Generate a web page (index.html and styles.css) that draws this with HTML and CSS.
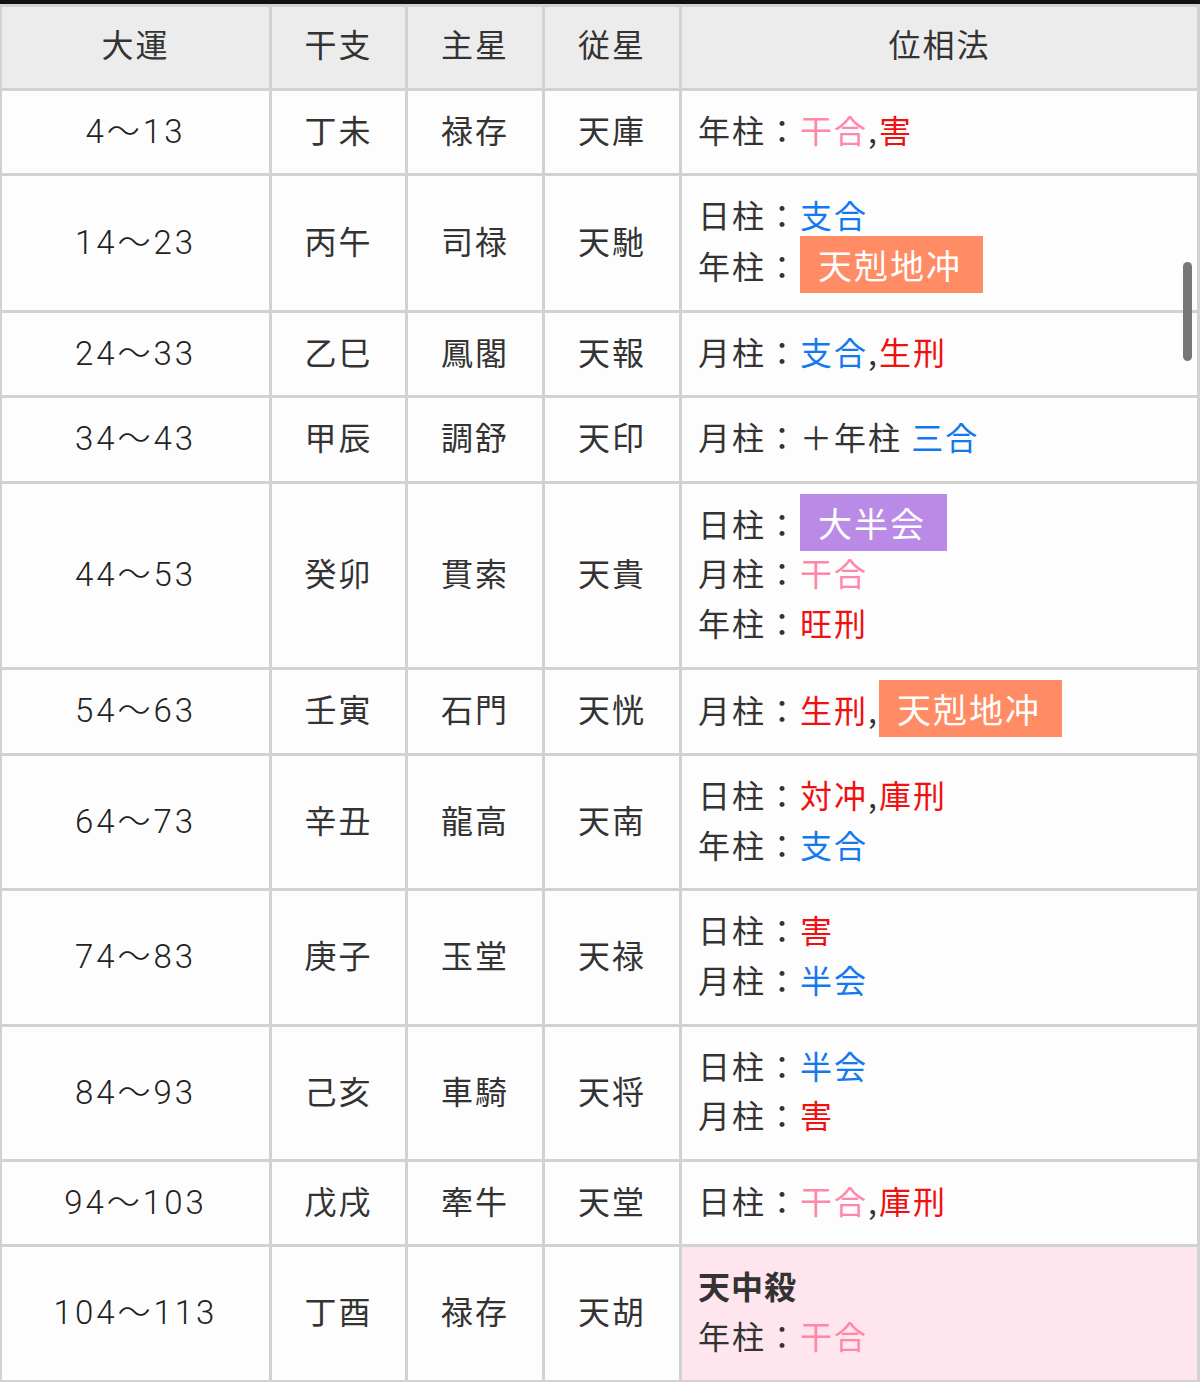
FILE: index.html
```html
<!DOCTYPE html>
<html lang="ja">
<head>
  <meta charset="UTF-8">
  <title>大運表</title>
  <link rel="stylesheet" href="styles.css">
</head>
<body>
  <div class="topbar"></div>
  <table class="unsei">
    <colgroup>
      <col class="c-age">
      <col class="c-kanshi">
      <col class="c-star">
      <col class="c-star">
      <col class="c-phase">
    </colgroup>
    <thead>
      <tr>
        <th>大運</th>
        <th>干支</th>
        <th>主星</th>
        <th>従星</th>
        <th>位相法</th>
      </tr>
    </thead>
    <tbody>
      <tr>
        <td class="age">4〜13</td><td>丁未</td><td>禄存</td><td>天庫</td>
        <td class="phase">年柱：<span class="kan">干合</span>,<span class="red">害</span></td>
      </tr>
      <tr>
        <td class="age">14〜23</td><td>丙午</td><td>司禄</td><td>天馳</td>
        <td class="phase">日柱：<span class="blue">支合</span><br>年柱：<span class="badge orange">天剋地冲</span></td>
      </tr>
      <tr>
        <td class="age">24〜33</td><td>乙巳</td><td>鳳閣</td><td>天報</td>
        <td class="phase">月柱：<span class="blue">支合</span>,<span class="red">生刑</span></td>
      </tr>
      <tr>
        <td class="age">34〜43</td><td>甲辰</td><td>調舒</td><td>天印</td>
        <td class="phase">月柱：＋年柱 <span class="blue">三合</span></td>
      </tr>
      <tr>
        <td class="age">44〜53</td><td>癸卯</td><td>貫索</td><td>天貴</td>
        <td class="phase">日柱：<span class="badge purple">大半会</span><br>月柱：<span class="kan">干合</span><br>年柱：<span class="red">旺刑</span></td>
      </tr>
      <tr>
        <td class="age">54〜63</td><td>壬寅</td><td>石門</td><td>天恍</td>
        <td class="phase">月柱：<span class="red">生刑</span>,<span class="badge orange">天剋地冲</span></td>
      </tr>
      <tr>
        <td class="age">64〜73</td><td>辛丑</td><td>龍高</td><td>天南</td>
        <td class="phase">日柱：<span class="red">対冲</span>,<span class="red">庫刑</span><br>年柱：<span class="blue">支合</span></td>
      </tr>
      <tr>
        <td class="age">74〜83</td><td>庚子</td><td>玉堂</td><td>天禄</td>
        <td class="phase">日柱：<span class="red">害</span><br>月柱：<span class="blue">半会</span></td>
      </tr>
      <tr>
        <td class="age">84〜93</td><td>己亥</td><td>車騎</td><td>天将</td>
        <td class="phase">日柱：<span class="blue">半会</span><br>月柱：<span class="red">害</span></td>
      </tr>
      <tr>
        <td class="age">94〜103</td><td>戊戌</td><td>牽牛</td><td>天堂</td>
        <td class="phase">日柱：<span class="kan">干合</span>,<span class="red">庫刑</span></td>
      </tr>
      <tr>
        <td class="age">104〜113</td><td>丁酉</td><td>禄存</td><td>天胡</td>
        <td class="phase tenchu"><strong>天中殺</strong><br>年柱：<span class="kan">干合</span></td>
      </tr>
    </tbody>
  </table>
  <div class="scroll-thumb"></div>
</body>
</html>
```

FILE: styles.css
```css
body {
  margin: 0;
  background: #fdfdfd;
  font-family: "Noto Sans CJK JP", "Noto Sans", sans-serif;
  color: #333;
  overflow: hidden;
}
.topbar {
  height: 4px;
  background: #111;
}
.unsei {
  width: calc(100% + 1px);
  margin-left: -1px;
  border-collapse: collapse;
  table-layout: fixed;
  font-size: 32px;
  letter-spacing: 2px;
  line-height: 49.8px;
}
.c-age { width: 270px; }
.c-kanshi { width: 136px; }
.c-star { width: 137px; }
.unsei th, .unsei td {
  border: 3px solid #d2d2d2;
  padding: 14px 0 18.7px;
  text-align: center;
  vertical-align: middle;
  font-weight: normal;
  white-space: nowrap;
}
.unsei th {
  background: #ececec;
  padding: 12px 0 19px;
}
.unsei td.age {
  font-family: Roboto, "Noto Sans CJK JP", sans-serif;
  font-size: 33px;
  font-weight: 300;
  letter-spacing: 3px;
  color: #222;
  padding: 16px 0 16.7px;
}
.unsei td.phase {
  text-align: left;
  padding-left: 16px;
}
.tenchu {
  background: #ffe6ee;
}
.tenchu strong {
  font-weight: bold;
  letter-spacing: 1px;
}
.blue { color: #1479ee; }
.red { color: #f01010; }
.kan { color: #ff88aa; }
.badge {
  color: #fff;
  font-size: 34px;
  padding: 4px 21px 4px 18px;
}
.orange { background: #ff8c64; }
.purple { background: #b98ae6; }
.scroll-thumb {
  position: absolute;
  left: 1183px;
  top: 262px;
  width: 9px;
  height: 99px;
  border-radius: 5px;
  background: #777;
}
```
